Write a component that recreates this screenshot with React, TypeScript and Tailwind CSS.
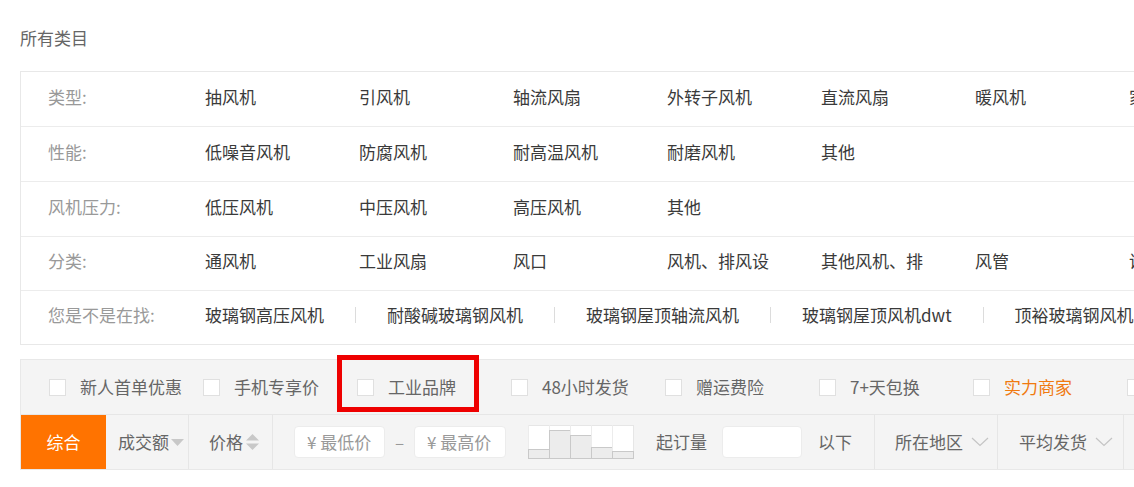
import React from "react";

const rows = [
  { label: "类型:", items: ["抽风机", "引风机", "轴流风扇", "外转子风机", "直流风扇", "暖风机", "家用风机"] },
  { label: "性能:", items: ["低噪音风机", "防腐风机", "耐高温风机", "耐磨风机", "其他"] },
  { label: "风机压力:", items: ["低压风机", "中压风机", "高压风机", "其他"] },
  { label: "分类:", items: ["通风机", "工业风扇", "风口", "风机、排风设", "其他风机、排", "风管", "诱导风机"] },
];

const related = ["玻璃钢高压风机", "耐酸碱玻璃钢风机", "玻璃钢屋顶轴流风机", "玻璃钢屋顶风机dwt", "顶裕玻璃钢风机", "玻璃钢风机"];

const filters = [
  { text: "新人首单优惠" },
  { text: "手机专享价" },
  { text: "工业品牌" },
  { text: "48小时发货" },
  { text: "赠运费险" },
  { text: "7+天包换" },
  { text: "实力商家", orange: true },
  { text: "先采后付" },
];

function Chevron() {
  return (
    <svg width="18" height="10" viewBox="0 0 18 10" className="ml-2 shrink-0">
      <polyline points="1,1 9,8.5 17,1" fill="none" stroke="#c4c4c4" strokeWidth="1.2" />
    </svg>
  );
}

function Histogram() {
  const bars = [9, 28, 23, 11, 7];
  return (
    <svg width="106" height="34" viewBox="0 0 106 34" className="block">
      <rect x="0.5" y="0.5" width="105" height="33" fill="#fff" stroke="#e6e6e6" />
      {bars.map((h, i) => (
        <g key={i}>
          <line x1={i * 21 + 0.5} y1="0" x2={i * 21 + 0.5} y2="34" stroke="#ececec" />
          <rect x={i * 21 + 0.5} y={33.5 - h} width="21" height={h} fill="#ececec" stroke="#c9c9c9" />
        </g>
      ))}
    </svg>
  );
}

export default function App() {
  return (
    <div className="relative w-[1134px] h-[487px] overflow-hidden bg-white font-['Noto_Sans_CJK_SC','Noto_Sans',sans-serif] text-[17px]">
      <div className="w-[1300px] pl-5">
        {/* title */}
        <div className="h-[71px] pt-[26px] leading-[24px] text-[#666]">所有类目</div>

        {/* category table */}
        <div className="border border-[#e8e8e8]">
          {rows.map((row, i) => (
            <div key={i} className={`flex items-center pl-[27px] pb-[5px] ${i < 2 ? "h-[55px]" : "h-[54.5px]"} border-b border-[#ececec]`}>
              <div className="w-[157px] shrink-0 text-[#999]">{row.label}</div>
              {row.items.map((it) => (
                <div key={it} className="w-[154px] shrink-0 text-[#3a3a3a] whitespace-nowrap">{it}</div>
              ))}
            </div>
          ))}
          <div className="flex items-center pl-[27px] pb-[5px] h-[53px]">
            <div className="w-[157px] shrink-0 text-[#999]">您是不是在找:</div>
            {related.map((it, i) => (
              <div key={it} className="flex items-center shrink-0 text-[#3a3a3a] whitespace-nowrap">
                {i > 0 && <span className="w-px h-[16px] bg-[#dcdcdc] mx-[31px]" />}
                <span>{it}</span>
              </div>
            ))}
          </div>
        </div>

        {/* filters + sort */}
        <div className="mt-[14px] bg-[#f4f4f4] border border-[#e8e8e8]">
          <div className="flex items-center h-[55px] pl-[28px] border-b border-[#e6e6e6]">
            {filters.map((f) => (
              <div key={f.text} className="w-[154px] shrink-0 flex items-center">
                <span className="w-[17px] h-[17px] bg-white border border-[#e0e0e0]" />
                <span className={`ml-[14px] whitespace-nowrap ${f.orange ? "text-[#f07a10]" : "text-[#666]"}`}>{f.text}</span>
              </div>
            ))}
          </div>
          <div className="flex items-center h-[54px] text-[#666]">
            <div className="w-[85px] shrink-0 h-full bg-[#ff7300] text-white flex items-center justify-center">综合</div>
            <div className="w-[83px] shrink-0 h-full flex items-center pl-[12px] border-r border-[#e6e6e6]">
              <span>成交额</span>
              <svg width="13" height="8" viewBox="0 0 13 8" className="ml-[2px] mt-[2px]">
                <polygon points="0,0 13,0 6.5,7" fill="#c8c8c8" />
              </svg>
            </div>
            <div className="w-[84px] shrink-0 h-full flex items-center pl-[20px] border-r border-[#e6e6e6]">
              <span>价格</span>
              <svg width="13" height="18" viewBox="0 0 13 18" className="ml-[3px]">
                <polygon points="6.5,1 13,7.5 0,7.5" fill="#c8c8c8" />
                <polygon points="0,10.5 13,10.5 6.5,17" fill="#c8c8c8" />
              </svg>
            </div>
            <div className="ml-[21px] shrink-0 w-[91px] h-[32px] bg-white rounded-sm border border-[#ececec] flex items-center pl-[12px] text-[#999]">¥ 最低价</div>
            <div className="w-[29px] shrink-0 text-center text-[#999]">–</div>
            <div className="w-[92px] shrink-0 h-[32px] bg-white rounded-sm border border-[#ececec] flex items-center pl-[12px] text-[#999]">¥ 最高价</div>
            <div className="ml-[22px] shrink-0">
              <Histogram />
            </div>
            <div className="ml-[22px] shrink-0 whitespace-nowrap">起订量</div>
            <div className="ml-[15px] shrink-0 w-[80px] h-[32px] bg-white rounded-sm border border-[#ececec]" />
            <div className="ml-[16px] shrink-0 w-[56px]">以下</div>
            <div className="w-[124px] shrink-0 h-full flex items-center pl-[20px] border-l border-r border-[#e6e6e6]">
              <span className="whitespace-nowrap">所在地区</span>
              <Chevron />
            </div>
            <div className="w-[126px] shrink-0 h-full flex items-center pl-[21px] border-r border-[#e6e6e6]">
              <span className="whitespace-nowrap">平均发货</span>
              <Chevron />
            </div>
          </div>
        </div>
      </div>

      {/* annotation */}
      <div className="absolute left-[337px] top-[355px] w-[142px] h-[57px] border-[5px] border-[#ee0000]" />
    </div>
  );
}
